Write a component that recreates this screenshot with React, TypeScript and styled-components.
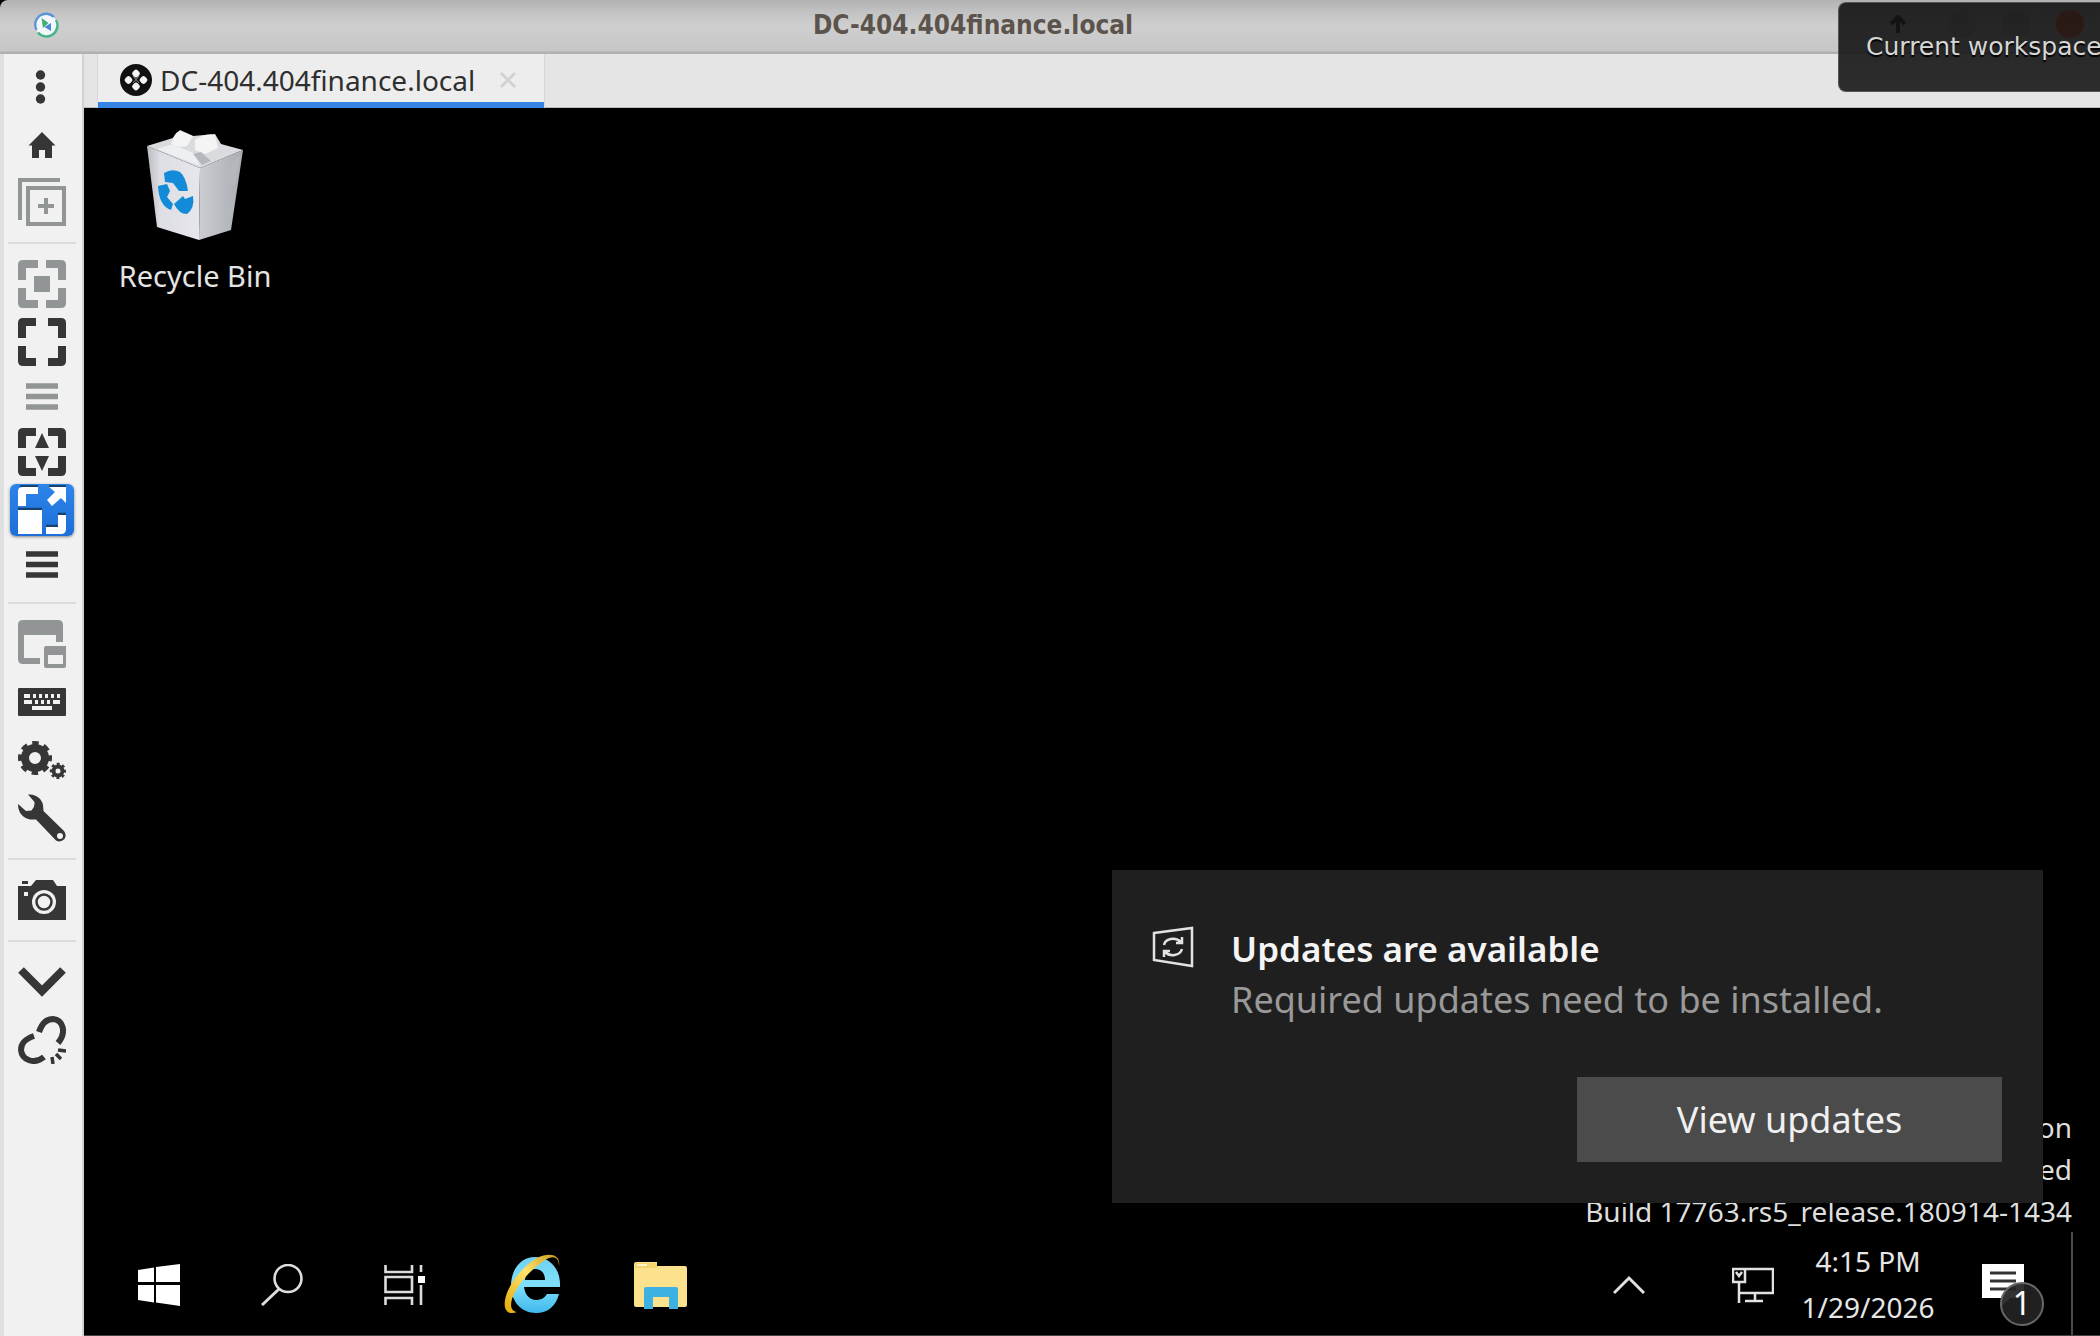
import React from "react";
import styled, { createGlobalStyle } from "styled-components";

const Global = createGlobalStyle`
  *, *::before, *::after { box-sizing: border-box; }
  html, body { margin: 0; height: 100%; overflow: hidden; background: #000; }
  button { font: inherit; color: inherit; padding: 0; border: 0; background: none; cursor: pointer; }
`;

const Window = styled.div`
  height: 100vh;
  display: grid;
  grid-template-rows: 54px minmax(0, 1fr);
  font-family: "Noto Sans", sans-serif;
  overflow: hidden;
  position: relative;
`;

const TitleBar = styled.header`
  display: grid;
  grid-template-columns: 92px minmax(0, 1fr) 246px;
  align-items: center;
  background: linear-gradient(#b2b2b2 0, #c2c2c2 12px, #cfcfcf 26px, #c6c6c6 51px, #b0b0b0 52px, #b0b0b0 54px);
  border-top-left-radius: 8px;
`;
const TitleIcon = styled.div`
  display: flex;
  justify-content: center;
  padding-bottom: 5px;
`;
const Title = styled.h1`
  margin: 0;
  padding-bottom: 4px;
  text-align: center;
  font: bold 26px/32px "DejaVu Sans Condensed", "DejaVu Sans", sans-serif;
  color: #5c544c;
`;
const WindowControls = styled.div`
  display: flex;
  justify-content: flex-end;
  align-items: center;
  gap: 26px;
  padding: 0 16px 6px 0;
`;
const Control = styled.button<{ $color?: string; $wide?: boolean }>`
  width: ${(p) => (p.$wide ? 48 : 28)}px;
  height: 28px;
  border-radius: 14px;
  background: ${(p) => p.$color || "transparent"};
  display: grid;
  place-items: center;
`;

const Body = styled.div`
  display: grid;
  grid-template-columns: 84px minmax(0, 1fr);
  min-height: 0;
`;
const Sidebar = styled.nav`
  background: #f1f1f1;
  box-shadow: inset 4px 0 0 #e0e0e0, inset -2px 0 0 #d2d2d2;
  padding-top: 3px;
  display: flex;
  flex-direction: column;
  align-items: center;
`;
const ToolSlot = styled.button<{ $short?: boolean; $muted?: boolean }>`
  width: 66px;
  height: ${(p) => (p.$short ? 52 : 58)}px;
  flex: none;
  display: grid;
  place-items: center;
  color: ${(p) => (p.$muted ? "#929595" : "#363636")};
`;
const ActiveFace = styled.span`
  width: 64px;
  height: 52px;
  display: grid;
  place-items: center;
  border-radius: 6px;
  background: linear-gradient(#2e84ea, #1c6fd8);
  box-shadow: 0 1px 3px rgba(0, 0, 0, 0.45);
`;
const Divider = styled.hr`
  width: 68px;
  height: 2px;
  margin: 11px 0;
  border: 0;
  flex: none;
  background: #dcdcdc;
`;

const Session = styled.main`
  display: grid;
  grid-template-rows: 54px minmax(0, 1fr);
  min-width: 0;
  min-height: 0;
`;
const TabStrip = styled.div`
  display: flex;
  background: #e5e5e5;
  padding-left: 13px;
  border-bottom: 1px solid #b9b9b9;
`;
const Tab = styled.div`
  width: 448px;
  height: 54px;
  display: flex;
  align-items: center;
  gap: 8px;
  padding: 0 26px 2px 22px;
  background: #ededed;
  border: solid #dad6d3;
  border-width: 0 1px;
  box-shadow: inset 0 -6px 0 #3584e4;
  color: #2f2f2f;
`;
const TabLabel = styled.span`
  flex: 1;
  font-size: 28px;
  line-height: 38px;
  white-space: nowrap;
`;
const TabClose = styled.button`
  display: grid;
  place-items: center;
`;

const Desktop = styled.section`
  background: #000;
  color: #fff;
  position: relative;
  display: grid;
  grid-template-rows: minmax(0, 1fr) 103px;
  min-height: 0;
  border-bottom: 1px solid #444;
`;
const Wallpaper = styled.div`
  display: flex;
  justify-content: space-between;
  padding: 22px 28px 0 24px;
`;
const Shortcut = styled.button`
  align-self: flex-start;
  width: 174px;
  display: flex;
  flex-direction: column;
  align-items: center;
  gap: 14px;
  font-size: 29px;
  line-height: 36px;
  color: #e4e4e4;
`;
const Watermark = styled.div`
  align-self: flex-end;
  text-align: right;
  font-size: 28px;
  line-height: 42px;
  color: #dedede;
  white-space: nowrap;
`;
const Toast = styled.aside`
  position: absolute;
  right: 57px;
  bottom: 132px;
  width: 931px;
  height: 333px;
  padding: 56px 41px 41px 40px;
  background: #1f1f1f;
  display: grid;
  grid-template-columns: 79px 1fr;
  grid-template-rows: 1fr 85px;
`;
const ToastBody = styled.div`
  margin-top: -3px;
`;
const ToastTitle = styled.h2`
  margin: 0;
  font-size: 35px;
  line-height: 51px;
  font-weight: 600;
  color: #f4f4f4;
`;
const ToastText = styled.p`
  margin: 0;
  font-size: 36px;
  line-height: 51px;
  color: #999;
`;
const ToastButton = styled.button`
  && {
    grid-column: 2;
    justify-self: end;
    width: 425px;
    background: #4b4b4b;
    color: #f0f0f0;
    font-size: 36px;
    line-height: 50px;
  }
`;

const Taskbar = styled.footer`
  display: flex;
  justify-content: space-between;
`;
const Apps = styled.div`
  display: flex;
  padding-left: 13px;
`;
const AppButton = styled.button<{ $wide?: boolean }>`
  && {
    width: ${(p) => (p.$wide ? 132 : 123)}px;
    padding-top: 3px;
    display: grid;
    place-items: center;
  }
`;
const Tray = styled.div`
  display: flex;
  align-items: stretch;
`;
const TrayButton = styled.button<{ $w: number }>`
  && {
    width: ${(p) => p.$w}px;
    padding-top: 3px;
    display: grid;
    place-items: center;
  }
`;
const Clock = styled.button`
  width: 134px;
  font-size: 28px;
  line-height: 46px;
  color: #e6e6e6;
`;
const ClockLine = styled.span`
  display: block;
  white-space: nowrap;
`;
const ShowDesktop = styled.button`
  && {
    width: 29px;
    border-left: 2px solid #4c4c4c;
  }
`;
const BadgeHost = styled.span`
  position: relative;
  display: block;
  width: 42px;
  height: 42px;
`;
const Badge = styled.span`
  position: absolute;
  right: -20px;
  bottom: -20px;
  width: 44px;
  height: 44px;
  border: 2px solid #686868;
  border-radius: 50%;
  background: rgba(34, 34, 34, 0.93);
  color: #fff;
  font-size: 32px;
  line-height: 38px;
  text-align: center;
`;

const Osd = styled.div`
  position: absolute;
  top: 2px;
  right: 0;
  width: 262px;
  height: 90px;
  padding: 26px 0 0 27px;
  border: 1px solid #555;
  border-right: 0;
  border-radius: 8px 0 0 8px;
  background: linear-gradient(rgba(20, 20, 20, 0.91), rgba(26, 26, 26, 0.91));
  color: #d6d6d6;
  text-shadow: 0 2px 1px #000;
  white-space: nowrap;
  font: 25px/36px "DejaVu Sans", sans-serif;
`;

const svg = (w: number, h: number, children: React.ReactNode) => (
  <svg width={w} height={h} viewBox={`0 0 ${w} ${h}`} fill="none" aria-hidden="true">
    {children}
  </svg>
);

const Logo = () =>
  svg(26, 26, <>
    <circle cx="13" cy="13" r="11" fill="#f2f7fa" />
    <path d="M3.500 18A11 11 0 0 1 21 5" stroke="#5a93d6" strokeWidth="2.400" />
    <path d="M23 8A11 11 0 0 1 5 20.500" stroke="#45b585" strokeWidth="2.400" />
    <path d="M8.500 6l7 5-5.500 5z" fill="#3fae74" />
    <path d="M18 11v8l-6.500-4z" fill="#4a86d8" />
  </>);

const SessionIcon = () =>
  svg(32, 32, <>
    <circle cx="16" cy="16" r="16" fill="#111" />
    <g fill="#f4f4f4">
      <rect x="12.500" y="6" width="7" height="7" rx="2.600" transform="rotate(45 16 9.500)" />
      <rect x="12.500" y="19" width="7" height="7" rx="2.600" transform="rotate(45 16 22.500)" />
      <rect x="5" y="12.500" width="7" height="7" rx="2.600" transform="rotate(45 8.500 16)" />
      <rect x="20" y="12.500" width="7" height="7" rx="2.600" transform="rotate(45 23.500 16)" />
      <path d="M13 12L19 19M19 12L13 19" stroke="#8a8a8a" strokeWidth="1" />
    </g>
  </>);

const Dots = () =>
  svg(48, 48, <g fill="currentColor"><circle cx="22.500" cy="13" r="4.700" /><circle cx="22.500" cy="25" r="4.700" /><circle cx="22.500" cy="37" r="4.700" /></g>);
const Home = () =>
  svg(48, 48, <path d="M24 12L37.500 25.500H34V38H27V30H21V38H14V25.500H10.500z" fill="currentColor" />);
const AddCopy = () =>
  svg(48, 48, <path d="M2 42V2H42M10 10H46V46H10zM28 20V36M20 28H36" stroke="currentColor" strokeWidth="4" />);
const corners = "M0 20V5Q0 0 5 0H18V8H8V20zM30 0H43Q48 0 48 5V20H40V8H30zM48 28V43Q48 48 43 48H30V40H40V28zM18 48H5Q0 48 0 43V28H8V40H18z";
const FitWindow = () =>
  svg(48, 48, <path d="M0 20V5Q0 0 5 0H20V8H8V20zM28 0H43Q48 0 48 5V20H40V8H28zM48 28V43Q48 48 43 48H28V40H40V28zM20 48H5Q0 48 0 43V28H8V40H20zM16 16H32V32H16z" fill="currentColor" />);
const FullScreen = () => svg(48, 48, <path d={corners} fill="currentColor" />);
const FitHeight = () =>
  svg(48, 48, <path d={corners + "M24 5L31 20H17zM24 43L31 28H17z"} fill="currentColor" />);
const Lines = () =>
  svg(32, 28, <path d="M0 3H32M0 13.500H32M0 24H32" stroke="currentColor" strokeWidth="5.500" />);
const Scale = () =>
  svg(48, 50, <>
    <path d="M2 1H20M0 24H24M40 29H48M28 41H40M31 1H48" stroke="#17446f" strokeWidth="2.500" />
    <path d="M0 21V6Q0 2 5 2H20V9H8V21zM0 25H24V49H0zM48 30V44Q48 49 43 49H28V42H40V30zM31 2H48V18L43 13L34 21L29 15L37 7z" fill="#fff" />
  </>);
const WindowCopy = () =>
  svg(48, 48, <path fillRule="evenodd" d="M5 0H40Q45 0 45 5V22H38V15H6V38H22V44H5Q0 44 0 39V5Q0 0 5 0zM28 26H48V46Q48 48 46 48H28Q26 48 26 46V28Q26 26 28 26zM30 35V44H45V35z" fill="currentColor" />);
const Keyboard = () =>
  svg(48, 28, <>
    <rect width="48" height="28" rx="1" fill="currentColor" />
    <path d="M6 8H12M15 8H18M21 8H24M27 8H30M33 8H36M39 8H42" stroke="#f1f1f1" strokeWidth="4" />
    <path d="M6 14H14M17 14H20M23 14H26M29 14H32M35 14H42" stroke="#f1f1f1" strokeWidth="4" />
    <path d="M14 20H34" stroke="#f1f1f1" strokeWidth="4" />
  </>);
const Gears = () =>
  svg(48, 38, <g stroke="currentColor">
    <circle cx="17" cy="17" r="10" strokeWidth="8" />
    <circle cx="17" cy="17" r="15" strokeWidth="4" strokeDasharray="6.500 5.281" strokeDashoffset="3.250" />
    <circle cx="40" cy="30" r="4.500" strokeWidth="4" />
    <circle cx="40" cy="30" r="7" strokeWidth="2.500" strokeDasharray="2.900 2.598" strokeDashoffset="1.450" />
  </g>);
const Wrench = () =>
  svg(48, 48, <path fillRule="evenodd" d="M10 0.500C18-.5 24 5 25 11L25.500 17L46 37Q49 41 46.500 45Q42.500 49 38 46.500L18 25.500L12 25.500C5 24 0 19 0 10L8 17L13.500 16.500Q17 13 16.500 8zM42 39A3 3 0 1 0 42 45A3 3 0 1 0 42 39z" fill="currentColor" />);
const Camera = () =>
  svg(48, 42, <>
    <path d="M0 7H13L18 1H35L39 7H48V41H0zM4 2H10V5H4z" fill="currentColor" />
    <rect x="6" y="13" width="4" height="4" fill="#f1f1f1" />
    <circle cx="26" cy="23" r="12" fill="#f1f1f1" />
    <circle cx="26" cy="23" r="7.500" stroke="currentColor" strokeWidth="2.500" />
  </>);
const Chevron = () => svg(48, 30, <path d="M3 3L24 24L45 3" stroke="currentColor" strokeWidth="8" />);
const Unlink = () =>
  svg(48, 48, <>
    <path d="M21 16C24 7 29 3 35 3C45 4 49 16 40 27M16 20C7 23 3 27 3 34C4 44 16 49 26 41" stroke="currentColor" strokeWidth="6" />
    <path d="M40 34L48 35M38 38L43 43M34 41L35 48" stroke="currentColor" strokeWidth="3.500" />
  </>);

const RecycleBin = () =>
  svg(100, 114, <>
    <defs>
      <linearGradient id="binLeft" x1="0" x2="1"><stop stopColor="#b9bbc0" /><stop offset=".25" stopColor="#dedfe4" /><stop offset="1" stopColor="#e6e6eb" /></linearGradient>
      <linearGradient id="binRight" x1="0" x2="1"><stop stopColor="#cbcdd2" /><stop offset="1" stopColor="#a9adb2" /></linearGradient>
    </defs>
    <path d="M2 16L55 38L54 110L12 97z" fill="url(#binLeft)" />
    <path d="M55 38L98 20L86 100L54 110z" fill="url(#binRight)" />
    <path d="M2 16L28 8L35 0L48 6L70 4L76 14L98 20L55 38z" fill="#d9dbde" />
    <path d="M28 8Q32 0 36 1L48 6L42 16Q34 18 26 14zM50 10Q60 3 70 5L73 18L60 24L50 20z" fill="#f4f4f5" />
    <path d="M12 19L28 14L50 24L55 36z" fill="#eeeff0" />
    <path d="M48 24L56 22L66 31L57 35zM88 30L95 26L90 54L83 51zM80 72L89 74L86 86z" fill="#b4b8bc" />
    <g fill="#138bd8">
      <path d="M19 43Q27 38 35 42Q41 47 43 61L34 61L28 53L20 52z" />
      <path d="M13 56L22 54L25 61L22 67L28 74L26 80Q14 76 13 56z" />
      <path d="M29 74L38 66L40 69L48 66Q50 78 42 84Q34 84 29 74z" />
    </g>
  </>);

const UpdateIcon = () =>
  svg(42, 42, <g stroke="#e2e2e2" strokeWidth="2.500">
    <path d="M2 7L40 2V40L2 34z" />
    <path d="M12 19C13 13 23 10 29 16M30 11V17H24M30 23C28 30 18 31 13 26M12 31V25H18" />
  </g>);
const StartIcon = () =>
  svg(42, 42, <path d="M0 6L16 3.500V18H0zM18 3L42 0V18H18zM0 21H16V38.500L0 36zM18 21H42V42L18 38.500z" fill="#fff" />);
const SearchIcon = () =>
  svg(42, 42, <><circle cx="27" cy="14.500" r="13.500" stroke="#dedede" strokeWidth="2.600" /><path d="M18 25L1 41" stroke="#dedede" strokeWidth="3" /></>);
const TaskViewIcon = () =>
  svg(42, 40, <g stroke="#dcdcdc" strokeWidth="2.600">
    <path d="M1.500 0V7H28V0M1.500 12H28V27H1.500zM1.500 40V33H28V40M37 0V7M37 20V40" />
    <rect x="34" y="11" width="7" height="7" fill="#fff" stroke="none" />
  </g>);
const ExplorerE = () =>
  svg(60, 66, <>
    <defs>
      <linearGradient id="ieBlue" x1="0" y1="0" x2="0" y2="1"><stop stopColor="#6fd0f2" /><stop offset=".5" stopColor="#7fe0fb" /><stop offset="1" stopColor="#3fb8ee" /></linearGradient>
      <linearGradient id="ieGold" x1="1" y1="0" x2="0" y2="1"><stop stopColor="#c99a1c" /><stop offset=".45" stopColor="#ffe36a" /><stop offset="1" stopColor="#e3a908" /></linearGradient>
    </defs>
    <path fillRule="evenodd" d="M33 5C48 5 59 17 58 35H22C23 43 28 48 34 48C40 48 43 45 45 42H57C54 54 46 61 34 61C20 61 9 50 9 34C9 17 19 5 33 5zM23 28H43C43 21 39 17 33 17C28 17 24 20 23 28z" fill="url(#ieBlue)" />
    <path d="M57 14C59 2 47 0 35 6C19 15 5 35 3 48C1 60 8 63 15 60C9 59 8 54 10 47C15 33 28 18 43 8C51 3 57 5 57 14z" fill="url(#ieGold)" />
  </>);
const FolderIcon = () =>
  svg(54, 48, <>
    <path d="M1 3Q1 1 3 1H24V5H52Q54 5 54 7V44Q54 46 52 46H3Q1 46 1 44z" fill="#fce28c" />
    <path d="M2 2H24V7H2z" fill="#f4d66c" />
    <path d="M4 3H14V5H4z" fill="#fff6cf" />
    <path d="M11 28Q11 26 13 26H43Q45 26 45 28V48H36V36H20V48H11z" fill="#3eb1e3" />
  </>);
const TrayUp = () => svg(32, 20, <path d="M1 18L16 3L31 18" stroke="#e2e2e2" strokeWidth="3" />);
const NetworkIcon = () =>
  svg(42, 36, <path d="M13 2H41V26H7M1 2H13V15H1zM4 5L7 9L10 5M7 15V36M23 26V34M13 34H31" stroke="#e2e2e2" strokeWidth="2.500" />);

export default function App() {
  return (
    <>
      <Global />
      <Window>
        <TitleBar>
          <TitleIcon><Logo /></TitleIcon>
          <Title>DC-404.404finance.local</Title>
          <WindowControls>
            <Control aria-label="Shade" $wide>
              {svg(18, 18, <path d="M9 18V3M2 9L9 2L16 9" stroke="#000" strokeWidth="4" />)}
            </Control>
            <Control aria-label="Minimize" $color="#adadad" />
            <Control aria-label="Maximize" $color="#adadad" />
            <Control aria-label="Close" $color="#f04a1d" />
          </WindowControls>
        </TitleBar>
        <Body>
          <Sidebar aria-label="Session tools">
            <ToolSlot aria-label="Menu"><Dots /></ToolSlot>
            <ToolSlot aria-label="Home"><Home /></ToolSlot>
            <ToolSlot aria-label="Duplicate" $muted><AddCopy /></ToolSlot>
            <Divider />
            <ToolSlot aria-label="Fit window" $muted><FitWindow /></ToolSlot>
            <ToolSlot aria-label="Full screen"><FullScreen /></ToolSlot>
            <ToolSlot aria-label="Full screen options" $short $muted><Lines /></ToolSlot>
            <ToolSlot aria-label="Dynamic resolution"><FitHeight /></ToolSlot>
            <ToolSlot aria-label="Scaled mode" aria-pressed="true"><ActiveFace><Scale /></ActiveFace></ToolSlot>
            <ToolSlot aria-label="Scale options" $short><Lines /></ToolSlot>
            <Divider />
            <ToolSlot aria-label="Multi monitor" $muted><WindowCopy /></ToolSlot>
            <ToolSlot aria-label="Grab keyboard"><Keyboard /></ToolSlot>
            <ToolSlot aria-label="Preferences"><Gears /></ToolSlot>
            <ToolSlot aria-label="Tools"><Wrench /></ToolSlot>
            <Divider />
            <ToolSlot aria-label="Screenshot"><Camera /></ToolSlot>
            <Divider />
            <ToolSlot aria-label="Minimize window"><Chevron /></ToolSlot>
            <ToolSlot aria-label="Disconnect"><Unlink /></ToolSlot>
          </Sidebar>
          <Session>
            <TabStrip>
              <Tab>
                <SessionIcon />
                <TabLabel>DC-404.404finance.local</TabLabel>
                <TabClose aria-label="Close tab">
                  {svg(20, 20, <path d="M3 3L17 17M17 3L3 17" stroke="#d2d2d2" strokeWidth="3" />)}
                </TabClose>
              </Tab>
            </TabStrip>
            <Desktop>
              <Wallpaper>
                <Shortcut><RecycleBin /><span>Recycle Bin</span></Shortcut>
                <Watermark>
                  <div>on</div>
                  <div>ed</div>
                  <div>Build 17763.rs5_release.180914-1434</div>
                </Watermark>
              </Wallpaper>
              <Toast>
                <UpdateIcon />
                <ToastBody>
                  <ToastTitle>Updates are available</ToastTitle>
                  <ToastText>Required updates need to be installed.</ToastText>
                </ToastBody>
                <ToastButton>View updates</ToastButton>
              </Toast>
              <Taskbar>
                <Apps>
                  <AppButton aria-label="Start"><StartIcon /></AppButton>
                  <AppButton aria-label="Search"><SearchIcon /></AppButton>
                  <AppButton aria-label="Task View"><TaskViewIcon /></AppButton>
                  <AppButton aria-label="Internet Explorer" $wide><ExplorerE /></AppButton>
                  <AppButton aria-label="File Explorer"><FolderIcon /></AppButton>
                </Apps>
                <Tray>
                  <TrayButton aria-label="Show hidden icons" $w={152}><TrayUp /></TrayButton>
                  <TrayButton aria-label="Network" $w={96}><NetworkIcon /></TrayButton>
                  <Clock><ClockLine>4:15 PM</ClockLine><ClockLine>1/29/2026</ClockLine></Clock>
                  <TrayButton aria-label="Notifications" $w={136}>
                    <BadgeHost>
                      {svg(42, 42, <>
                        <path d="M0 0H42V34H28L20 42V34H0z" fill="#fff" />
                        <path d="M8 9H34M8 17H34M8 25H34" stroke="#333" strokeWidth="3" />
                      </>)}
                      <Badge>1</Badge>
                    </BadgeHost>
                  </TrayButton>
                  <ShowDesktop aria-label="Show desktop" />
                </Tray>
              </Taskbar>
            </Desktop>
          </Session>
        </Body>
        <Osd role="status">Current workspace</Osd>
      </Window>
    </>
  );
}
